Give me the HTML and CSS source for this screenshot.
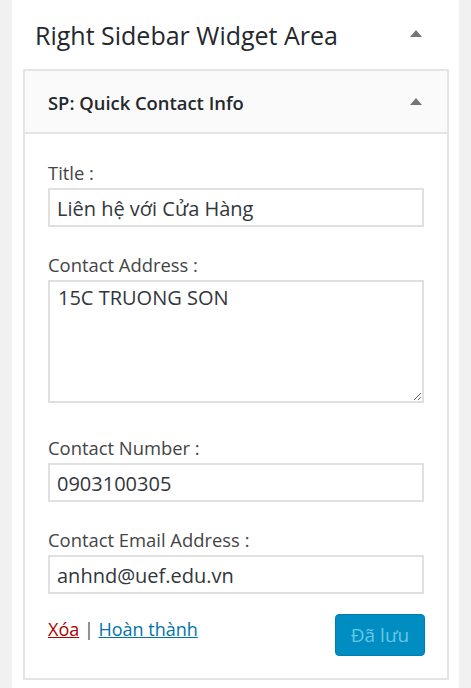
FILE: index.html
```html
<!DOCTYPE html>
<html lang="vi">
<head>
<meta charset="utf-8">
<title>Right Sidebar Widget Area</title>
<link rel="stylesheet" href="styles.css">
</head>
<body>
<div class="sidebar">
  <div class="sidebar-head">
    <h2 class="sidebar-title">Right Sidebar Widget Area</h2>
    <svg class="arrow" width="12" height="7" viewBox="0 0 12 7"><polygon points="6,0 12,7 0,7" fill="#72777c"/></svg>
  </div>
  <div class="widget">
    <div class="widget-top">
      <h3 class="widget-title">SP: Quick Contact Info</h3>
      <svg class="arrow" width="12" height="7" viewBox="0 0 12 7"><polygon points="6,0 12,7 0,7" fill="#72777c"/></svg>
    </div>
    <div class="widget-inside">
      <div class="field">
        <label class="label" for="f-title">Title :</label>
        <input class="text" id="f-title" type="text" value="Liên hệ với Cửa Hàng">
      </div>
      <div class="field">
        <label class="label" for="f-addr">Contact Address :</label>
        <textarea class="area" id="f-addr">15C TRUONG SON</textarea>
      </div>
      <div class="field">
        <label class="label" for="f-num">Contact Number :</label>
        <input class="text" id="f-num" type="text" value="0903100305">
      </div>
      <div class="field">
        <label class="label" for="f-mail">Contact Email Address :</label>
        <input class="text" id="f-mail" type="text" value="anhnd@uef.edu.vn">
      </div>
      <div class="actions">
        <div class="links"><a class="delete" href="#">Xóa</a> <span class="sep">|</span> <a class="done" href="#">Hoàn thành</a></div>
        <button class="save" type="button" disabled>Đã lưu</button>
      </div>
    </div>
  </div>
</div>
</body>
</html>
```
FILE: styles.css
```css
html, body {
  margin: 0;
  padding: 0;
}
body {
  background: #f1f1f1;
  font-family: "Open Sans", "Noto Sans", sans-serif;
  color: #444;
  height: 688px;
  overflow: hidden;
}
.sidebar {
  margin-left: 12px;
  width: 447px;
  height: 688px;
  background: #fff;
}
.sidebar-head {
  display: flex;
  justify-content: space-between;
  align-items: flex-start;
  height: 69px;
  box-sizing: border-box;
  padding: 20px 37px 0 23px;
}
.sidebar-title {
  margin: 0;
  font-size: 25px;
  font-weight: 400;
  line-height: 30px;
  color: #23282d;
}
.sidebar-head .arrow {
  margin-top: 10px;
}
.widget {
  margin: 0 10px 0 11px;
  border: 2px solid #e5e5e5;
  background: #fff;
}
.widget-top {
  display: flex;
  justify-content: space-between;
  align-items: center;
  height: 61px;
  padding: 0 25px 0 23px;
  background: #fafafa;
  border-bottom: 2px solid #e5e5e5;
}
.widget-title {
  margin: 0;
  padding-top: 3px;
  font-size: 18.4px;
  font-weight: 600;
  line-height: 24px;
  color: #23282d;
}
.widget-inside {
  padding: 27px 23px 22px;
}
.field {
  display: flex;
  flex-direction: column;
  margin-bottom: 26px;
}
.label {
  font-size: 18.4px;
  line-height: 24px;
  margin-bottom: 3px;
  color: #444;
}
.text, .area {
  box-sizing: border-box;
  width: 100%;
  margin: 0;
  border: 2px solid #e0e0e0;
  border-radius: 0;
  background: #fff;
  color: #32373c;
  font-family: "Open Sans", "Noto Sans", sans-serif;
  font-size: 20px;
  outline: none;
}
.text {
  height: 39px;
  padding: 2px 7px 0;
}
.area {
  display: block;
  height: 123px;
  padding: 2px 8px;
  line-height: 1.4;
  resize: vertical;
  margin-bottom: 7px;
}
.actions {
  display: flex;
  justify-content: space-between;
  align-items: flex-start;
  margin-top: -6px;
}
.links {
  margin-top: 3px;
  font-size: 18px;
  line-height: 24px;
  color: #555;
}
.delete {
  color: #a00;
  text-decoration: underline;
}
.done {
  color: #0073aa;
  text-decoration: underline;
}
.save {
  width: 90px;
  height: 42px;
  margin: 0 -1px 0 0;
  padding: 0;
  border: 1px solid #007cb2;
  border-radius: 4px;
  background: #008ec2;
  color: #66c6e4;
  font-family: "Open Sans", "Noto Sans", sans-serif;
  font-size: 19px;
  cursor: default;
}
```
